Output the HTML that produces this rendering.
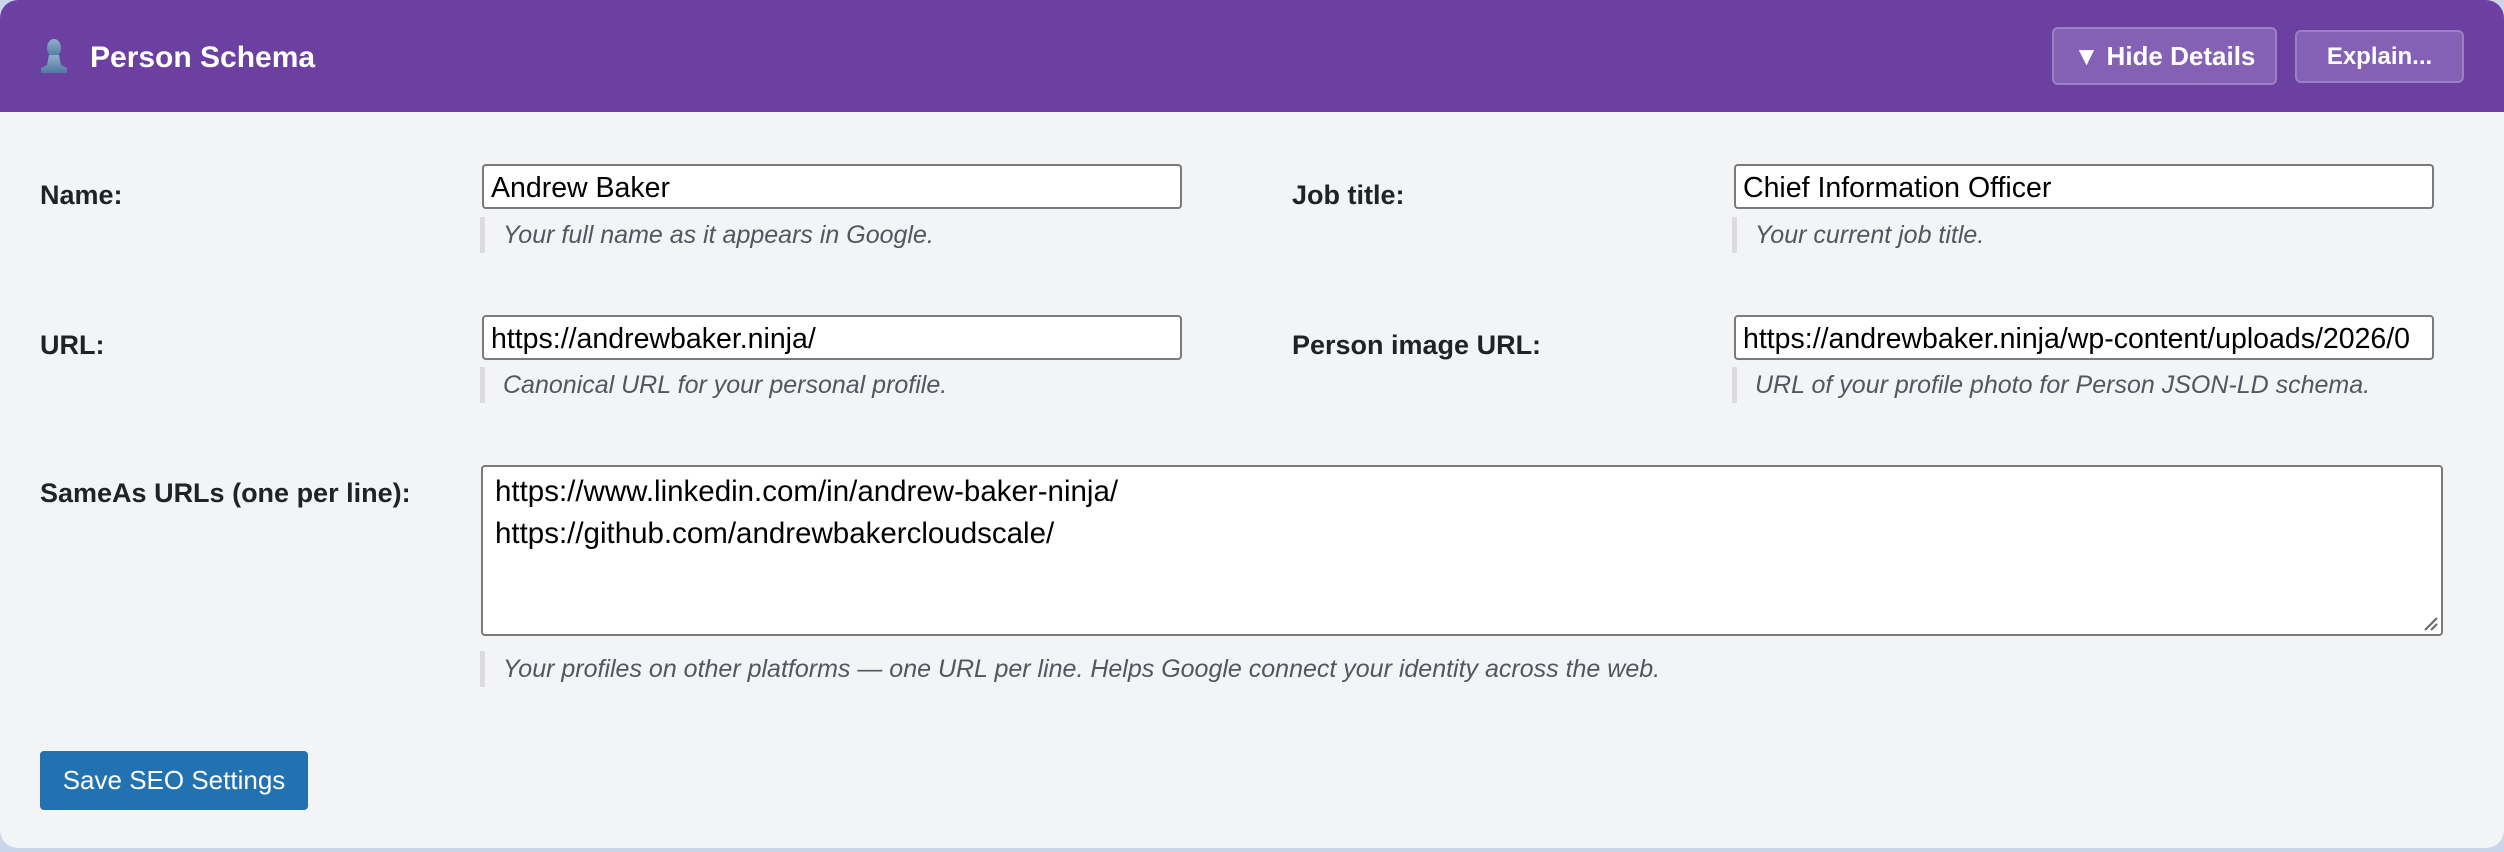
<!DOCTYPE html>
<html><head><meta charset="utf-8"><style>
*{box-sizing:border-box;margin:0;padding:0}
html,body{width:2504px;height:852px;overflow:hidden;background:#c9d5ea;font-family:"Liberation Sans",Arial,sans-serif}
.card{position:absolute;left:0;top:0;width:2504px;height:848px;background:#f3f4f6;border-radius:18px;overflow:hidden}
.hdr{position:absolute;left:0;top:0;width:2504px;height:112px;background:#6b40a0}
.title{position:absolute;left:90px;top:41px;color:#fff;font-weight:bold;font-size:30px}
.btn{position:absolute;color:#fff;font-weight:bold;background:#8461b4;border:2px solid #9c80c4;border-radius:6px;text-align:center}
.lbl{position:absolute;font-weight:bold;font-size:27px;color:#1d2327}
.inp{position:absolute;height:45px;background:#fff;border:2px solid #7a7a7a;border-radius:4px;font-size:28.5px;color:#000;padding:6px 7px 0;white-space:nowrap;overflow:hidden}
.hint{position:absolute;border-left:5px solid #dcdcde;padding-left:18px;font-style:italic;font-size:25px;color:#50575e;height:36px;line-height:36px;white-space:nowrap}
</style></head><body>
<div class="card">
<div class="hdr">
<svg style="position:absolute;left:40px;top:38px" width="28" height="36" viewBox="0 0 28 36"><defs><linearGradient id="g" x1="0" y1="0" x2="0" y2="1"><stop offset="0" stop-color="#8fb0cc"/><stop offset="1" stop-color="#4f78a0"/></linearGradient></defs><ellipse cx="14" cy="10" rx="7" ry="9" fill="url(#g)"/><path d="M9 17 L19 17 L21 27 L27 30 L27 35 L1 35 L1 30 L7 27 Z" fill="url(#g)"/></svg>
<div class="title">Person Schema</div>
<div class="btn" style="left:2052px;top:27px;width:225px;height:58px;line-height:54px;font-size:26px">▼ Hide Details</div>
<div class="btn" style="left:2295px;top:30px;width:169px;height:53px;line-height:49px;font-size:24px">Explain...</div>
</div>

<div class="lbl" style="left:40px;top:180px">Name:</div>
<div class="inp" style="left:482px;top:164px;width:700px">Andrew Baker</div>
<div class="hint" style="left:480px;top:217px">Your full name as it appears in Google.</div>

<div class="lbl" style="left:1292px;top:180px">Job title:</div>
<div class="inp" style="left:1734px;top:164px;width:700px">Chief Information Officer</div>
<div class="hint" style="left:1732px;top:217px">Your current job title.</div>

<div class="lbl" style="left:40px;top:330px">URL:</div>
<div class="inp" style="left:482px;top:315px;width:700px">https://andrewbaker.ninja/</div>
<div class="hint" style="left:480px;top:367px">Canonical URL for your personal profile.</div>

<div class="lbl" style="left:1292px;top:330px">Person image URL:</div>
<div class="inp" style="left:1734px;top:315px;width:700px">https://andrewbaker.ninja/wp-content/uploads/2026/0</div>
<div class="hint" style="left:1732px;top:367px">URL of your profile photo for Person JSON-LD schema.</div>

<div class="lbl" style="left:40px;top:478px">SameAs URLs (one per line):</div>
<div class="inp" style="left:481px;top:465px;width:1962px;height:171px;padding:4px 12px;line-height:42px;font-size:29.5px;white-space:pre">https://www.linkedin.com/in/andrew-baker-ninja/
https://github.com/andrewbakercloudscale/</div>
<svg style="position:absolute;left:2424px;top:617px" width="14" height="14"><path d="M1 13 L13 1 M7 13 L13 7" stroke="#666" stroke-width="2"/></svg>
<div class="hint" style="left:480px;top:651px">Your profiles on other platforms — one URL per line. Helps Google connect your identity across the web.</div>

<div style="position:absolute;left:40px;top:751px;width:268px;height:59px;background:#2271b1;border-radius:4px;color:#fff;font-size:26px;line-height:59px;text-align:center">Save SEO Settings</div>
</div>
</body></html>
